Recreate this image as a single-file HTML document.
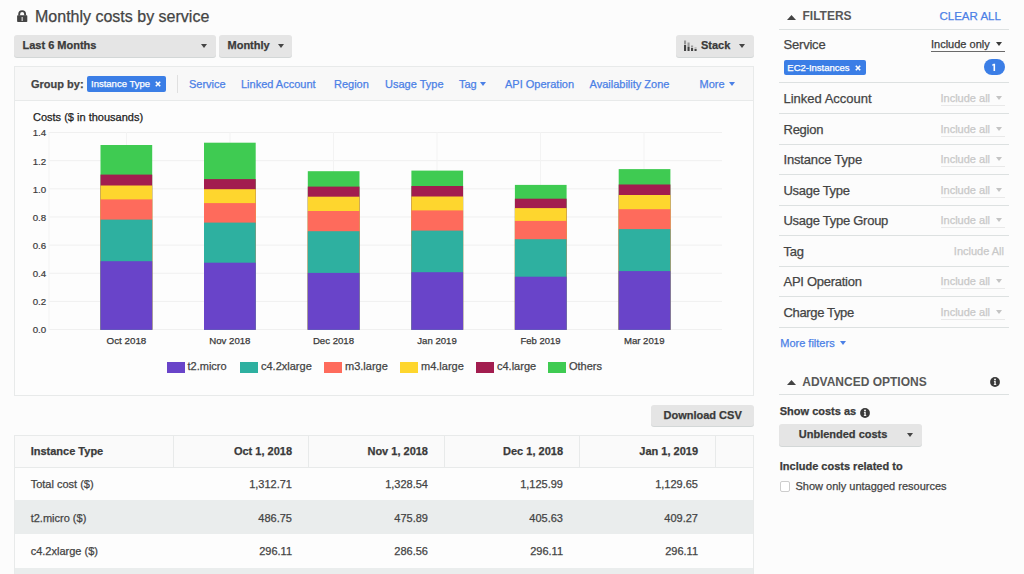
<!DOCTYPE html>
<html><head><meta charset="utf-8">
<style>
html,body{margin:0;padding:0;}
body{width:1024px;height:574px;overflow:hidden;background:#fcfcfc;position:relative;font-family:"Liberation Sans",sans-serif;color:#444;}
.t{position:absolute;white-space:nowrap;line-height:1;-webkit-text-stroke:0.25px currentColor;}
.b{font-weight:bold;}
.abs{position:absolute;}
.btn{position:absolute;background:#e5e5e5;border-radius:3px;box-shadow:0 1px 0 #d3d7d7;}
.tri{position:absolute;width:0;height:0;border-left:3.3px solid transparent;border-right:3.3px solid transparent;border-top:4.3px solid #444;}
.link{color:#4b80e6;}
.hr{position:absolute;height:1px;background:#dde1e1;}
</style></head><body>

<!-- Title -->
<svg class="abs" style="left:17px;top:10px" width="11" height="12" viewBox="0 0 11 12"><path d="M2.2 5.6V4.1a2.95 2.95 0 0 1 5.9 0v1.5" fill="none" stroke="#444" stroke-width="1.9"/><rect x="0.1" y="5.2" width="10.2" height="6.8" rx="0.8" fill="#444"/><rect x="4.6" y="7" width="1.1" height="4" fill="#fff" opacity="0.85"/></svg>
<div class="t" style="left:35px;top:8.5px;font-size:16px;color:#444">Monthly costs by service</div>

<div class="btn" style="left:14px;top:34.8px;width:201.6px;height:22.2px"></div>
<div class="t b" style="left:22.5px;top:40.2px;font-size:11px;color:#3a3a3a">Last 6 Months</div>
<div class="tri" style="left:200.8px;top:44px"></div>

<div class="btn" style="left:219px;top:35px;width:73px;height:22px"></div>
<div class="t b" style="left:227.5px;top:40.2px;font-size:11px;color:#3a3a3a">Monthly</div>
<div class="tri" style="left:277.7px;top:44px"></div>

<div class="btn" style="left:676px;top:35px;width:78px;height:22px"></div>
<svg class="abs" style="left:684px;top:40px" width="13" height="11" viewBox="0 0 13 11"><g fill="#444"><rect x="0" y="5" width="2.1" height="6"/><rect x="3.5" y="6.5" width="2.1" height="4.5"/><rect x="7" y="8" width="2.1" height="3"/><rect x="10.5" y="9" width="2.1" height="2"/></g><g fill="#999"><rect x="0" y="0.5" width="2.1" height="4"/><rect x="3.5" y="2.5" width="2.1" height="3.5"/><rect x="7" y="5.5" width="2.1" height="2"/><rect x="10.5" y="7.5" width="2.1" height="1"/></g></svg>
<div class="t b" style="left:701px;top:40.2px;font-size:11px;color:#3a3a3a">Stack</div>
<div class="tri" style="left:739.3px;top:43.8px"></div>

<!-- Chart panel -->
<div class="abs" style="left:14px;top:66px;width:738px;height:328px;border:1px solid #e8eaea;background:#fdfdfd"></div>
<div class="abs" style="left:15px;top:67px;width:738px;height:33px;background:#f8f8f8;border-bottom:1px solid #e8eaea"></div>
<div class="t b" style="left:31px;top:79.2px;font-size:11px;color:#444">Group by:</div>
<div class="abs" style="left:86.5px;top:76px;width:79px;height:16px;background:#3b7ee6;border-radius:2px"></div>
<div class="t" style="left:91px;top:79px;font-size:9.5px;color:#fff">Instance Type</div>
<svg class="abs" style="left:155px;top:81px" width="6" height="6" viewBox="0 0 6 6"><path d="M0.8 0.8L5.2 5.2M5.2 0.8L0.8 5.2" stroke="#fff" stroke-width="1.6"/></svg>
<div class="abs" style="left:177px;top:75px;width:1px;height:18px;background:#e0e0e0"></div>
<div class="t link" style="left:189px;top:79.4px;font-size:11px">Service</div>
<div class="t link" style="left:241px;top:79.4px;font-size:11px">Linked Account</div>
<div class="t link" style="left:334px;top:79.4px;font-size:11px">Region</div>
<div class="t link" style="left:385px;top:79.4px;font-size:11px">Usage Type</div>
<div class="t link" style="left:459px;top:79.4px;font-size:11px">Tag</div>
<div class="tri" style="left:480.3px;top:82.4px;border-top-color:#4b80e6"></div>
<div class="t link" style="left:505px;top:79.4px;font-size:11px">API Operation</div>
<div class="t link" style="left:589.5px;top:79.4px;font-size:11px">Availability Zone</div>
<div class="t link" style="left:699.5px;top:79.4px;font-size:11px">More</div>
<div class="tri" style="left:729px;top:82.4px;border-top-color:#4b80e6"></div>

<div class="t" style="left:33px;top:112.4px;font-size:11px;color:#222">Costs ($ in thousands)</div>

<svg class="abs" style="left:0;top:0" width="760" height="400">
 <g stroke="#f0f0f0" stroke-width="1" fill="none"><path d="M49 132.50H722M49 160.65H722M49 188.80H722M49 216.95H722M49 245.10H722M49 273.25H722M49 301.40H722M49 329.55H722"/><path d="M49 132V330M126.5 132V330M230 132V330M333.5 132V330M437 132V330M540.5 132V330M644 132V330" stroke="#f3f3f3"/></g>
 <g font-family="Liberation Sans" font-size="9.7" fill="#3a3a3a" stroke="#3a3a3a" stroke-width="0.2" text-anchor="end"><text x="46.2" y="136.3">1.4</text><text x="46.2" y="164.5">1.2</text><text x="46.2" y="192.6">1.0</text><text x="46.2" y="220.8">0.8</text><text x="46.2" y="248.9">0.6</text><text x="46.2" y="277.1">0.4</text><text x="46.2" y="305.2">0.2</text><text x="46.2" y="333.4">0.0</text></g>
 <g font-family="Liberation Sans" font-size="9.8" fill="#383838" stroke="#383838" stroke-width="0.25" text-anchor="middle"><text x="126.4" y="344.3" textLength="39.8" lengthAdjust="spacingAndGlyphs">Oct 2018</text><text x="229.85" y="344.3" textLength="41.3" lengthAdjust="spacingAndGlyphs">Nov 2018</text><text x="333.5" y="344.3" textLength="41.199999999999996" lengthAdjust="spacingAndGlyphs">Dec 2018</text><text x="437" y="344.3" textLength="39.5" lengthAdjust="spacingAndGlyphs">Jan 2019</text><text x="540.5" y="344.3" textLength="40.099999999999994" lengthAdjust="spacingAndGlyphs">Feb 2019</text><text x="644.2" y="344.3" textLength="40.599999999999994" lengthAdjust="spacingAndGlyphs">Mar 2019</text></g>
 <g id="bars"><rect x="100.5" y="145.0" width="51.7" height="184.8" fill="#3fcb52"/><rect x="100.5" y="174.6" width="51.7" height="155.2" fill="#a21d4f"/><rect x="100.5" y="185.5" width="51.7" height="144.3" fill="#fed62e"/><rect x="100.5" y="199.4" width="51.7" height="130.4" fill="#fe6b5c"/><rect x="100.5" y="219.6" width="51.7" height="110.2" fill="#2eb0a0"/><rect x="100.5" y="261.2" width="51.7" height="68.6" fill="#6944c9"/><rect x="204" y="142.7" width="51.7" height="187.1" fill="#3fcb52"/><rect x="204" y="179.1" width="51.7" height="150.7" fill="#a21d4f"/><rect x="204" y="189.2" width="51.7" height="140.6" fill="#fed62e"/><rect x="204" y="203.1" width="51.7" height="126.7" fill="#fe6b5c"/><rect x="204" y="222.6" width="51.7" height="107.2" fill="#2eb0a0"/><rect x="204" y="262.7" width="51.7" height="67.1" fill="#6944c9"/><rect x="307.8" y="171.2" width="51.7" height="158.6" fill="#3fcb52"/><rect x="307.8" y="186.6" width="51.7" height="143.2" fill="#a21d4f"/><rect x="307.8" y="196.7" width="51.7" height="133.1" fill="#fed62e"/><rect x="307.8" y="211.0" width="51.7" height="118.8" fill="#fe6b5c"/><rect x="307.8" y="231.2" width="51.7" height="98.6" fill="#2eb0a0"/><rect x="307.8" y="272.9" width="51.7" height="56.9" fill="#6944c9"/><rect x="411.4" y="170.6" width="51.7" height="159.2" fill="#3fcb52"/><rect x="411.4" y="186.0" width="51.7" height="143.8" fill="#a21d4f"/><rect x="411.4" y="196.5" width="51.7" height="133.3" fill="#fed62e"/><rect x="411.4" y="210.4" width="51.7" height="119.4" fill="#fe6b5c"/><rect x="411.4" y="230.6" width="51.7" height="99.2" fill="#2eb0a0"/><rect x="411.4" y="272.2" width="51.7" height="57.6" fill="#6944c9"/><rect x="514.9" y="184.9" width="51.7" height="144.9" fill="#3fcb52"/><rect x="514.9" y="198.7" width="51.7" height="131.1" fill="#a21d4f"/><rect x="514.9" y="208.1" width="51.7" height="121.7" fill="#fed62e"/><rect x="514.9" y="220.9" width="51.7" height="108.9" fill="#fe6b5c"/><rect x="514.9" y="239.2" width="51.7" height="90.6" fill="#2eb0a0"/><rect x="514.9" y="276.7" width="51.7" height="53.1" fill="#6944c9"/><rect x="618.7" y="169.1" width="51.7" height="160.7" fill="#3fcb52"/><rect x="618.7" y="184.5" width="51.7" height="145.3" fill="#a21d4f"/><rect x="618.7" y="195.0" width="51.7" height="134.8" fill="#fed62e"/><rect x="618.7" y="209.2" width="51.7" height="120.6" fill="#fe6b5c"/><rect x="618.7" y="229.1" width="51.7" height="100.7" fill="#2eb0a0"/><rect x="618.7" y="271.1" width="51.7" height="58.7" fill="#6944c9"/></g>
</svg>


<!-- Legend -->
<div class="abs" style="left:166.5px;top:361.5px;width:18px;height:11.5px;background:#6944c9"></div>
<div class="t" style="left:187.5px;top:361.2px;font-size:11px;color:#444">t2.micro</div>
<div class="abs" style="left:240px;top:361.5px;width:18px;height:11.5px;background:#2eb0a0"></div>
<div class="t" style="left:261.0px;top:361.2px;font-size:11px;color:#444">c4.2xlarge</div>
<div class="abs" style="left:324px;top:361.5px;width:18px;height:11.5px;background:#fe6b5c"></div>
<div class="t" style="left:345.0px;top:361.2px;font-size:11px;color:#444">m3.large</div>
<div class="abs" style="left:399.7px;top:361.5px;width:18px;height:11.5px;background:#fed62e"></div>
<div class="t" style="left:421.0px;top:361.2px;font-size:11px;color:#444">m4.large</div>
<div class="abs" style="left:476px;top:361.5px;width:18px;height:11.5px;background:#a21d4f"></div>
<div class="t" style="left:497.0px;top:361.2px;font-size:11px;color:#444">c4.large</div>
<div class="abs" style="left:548px;top:361.5px;width:18px;height:11.5px;background:#3fcb52"></div>
<div class="t" style="left:569.0px;top:361.2px;font-size:11px;color:#444">Others</div>

<!-- Download CSV -->
<div class="btn" style="left:651px;top:404.6px;width:102.5px;height:21.6px"></div>
<div class="t b" style="left:663.5px;top:409.8px;font-size:11px;color:#3a3a3a">Download CSV</div>

<!-- Table -->
<div class="abs" style="left:14px;top:435px;width:738px;height:140px;border:1px solid #e8eaea;background:#fdfdfd;border-bottom:none"></div>
<div class="abs" style="left:15px;top:436px;width:738px;height:30.5px;background:#fafafa;border-bottom:1px solid #e8eaea"></div>
<div class="abs" style="left:15px;top:500px;width:738px;height:33.5px;background:#eaeded"></div>
<div class="abs" style="left:15px;top:567.5px;width:738px;height:10px;background:#eaeded"></div>
<div class="abs" style="left:172.5px;top:436px;width:1px;height:31px;background:#e8eaea"></div>
<div class="abs" style="left:308px;top:436px;width:1px;height:31px;background:#e8eaea"></div>
<div class="abs" style="left:444px;top:436px;width:1px;height:31px;background:#e8eaea"></div>
<div class="abs" style="left:579px;top:436px;width:1px;height:31px;background:#e8eaea"></div>
<div class="abs" style="left:714.5px;top:436px;width:1px;height:31px;background:#e8eaea"></div>
<div class="t b" style="left:30.7px;top:446.3px;font-size:11px;color:#3a3a3a">Instance Type</div>
<div class="t b" style="right:732px;top:446.3px;font-size:11px;color:#3a3a3a">Oct 1, 2018</div>
<div class="t b" style="right:596px;top:446.3px;font-size:11px;color:#3a3a3a">Nov 1, 2018</div>
<div class="t b" style="right:461px;top:446.3px;font-size:11px;color:#3a3a3a">Dec 1, 2018</div>
<div class="t b" style="right:326px;top:446.3px;font-size:11px;color:#3a3a3a">Jan 1, 2019</div>

<div class="t" style="left:30.7px;top:479.3px;font-size:11px;color:#444">Total cost ($)</div>
<div class="t" style="right:732px;top:479.3px;font-size:11px;color:#444">1,312.71</div>
<div class="t" style="right:596px;top:479.3px;font-size:11px;color:#444">1,328.54</div>
<div class="t" style="right:461px;top:479.3px;font-size:11px;color:#444">1,125.99</div>
<div class="t" style="right:326px;top:479.3px;font-size:11px;color:#444">1,129.65</div>

<div class="t" style="left:30.7px;top:512.8px;font-size:11px;color:#444">t2.micro ($)</div>
<div class="t" style="right:732px;top:512.8px;font-size:11px;color:#444">486.75</div>
<div class="t" style="right:596px;top:512.8px;font-size:11px;color:#444">475.89</div>
<div class="t" style="right:461px;top:512.8px;font-size:11px;color:#444">405.63</div>
<div class="t" style="right:326px;top:512.8px;font-size:11px;color:#444">409.27</div>

<div class="t" style="left:30.7px;top:546.3px;font-size:11px;color:#444">c4.2xlarge ($)</div>
<div class="t" style="right:732px;top:546.3px;font-size:11px;color:#444">296.11</div>
<div class="t" style="right:596px;top:546.3px;font-size:11px;color:#444">286.56</div>
<div class="t" style="right:461px;top:546.3px;font-size:11px;color:#444">296.11</div>
<div class="t" style="right:326px;top:546.3px;font-size:11px;color:#444">296.11</div>

<!-- Sidebar -->
<svg class="abs" style="left:786.5px;top:14.5px" width="9" height="5" viewBox="0 0 9 5"><path d="M0 5L4.5 0L9 5Z" fill="#444"/></svg>
<div class="t b" style="left:802.5px;top:10.34px;font-size:12px;color:#585858;-webkit-text-stroke:0">FILTERS</div>
<div class="t link" style="left:939.5px;top:10.77px;font-size:11.5px">CLEAR ALL</div>
<div class="hr" style="left:779px;top:29px;width:230px"></div>
<div class="t" style="left:783.5px;top:37.75px;font-size:13px;letter-spacing:-0.2px;color:#444">Service</div>
<div class="t" style="left:931px;top:39.44px;font-size:11px;color:#3a3a3a">Include only</div>
<div class="abs" style="left:931px;top:50.8px;width:73.5px;height:1px;background:#6a6a6a"></div>
<div class="tri" style="left:996px;top:42.2px;border-top-color:#3a3a3a"></div>
<div class="abs" style="left:783.5px;top:59.5px;width:82px;height:15.5px;background:#3b7ee6;border-radius:2px"></div>
<div class="t" style="left:787.3px;top:62.53px;font-size:9.5px;color:#fff">EC2-Instances</div>
<svg class="abs" style="left:855px;top:64.6px" width="6" height="6" viewBox="0 0 6 6"><path d="M0.8 0.8L5.2 5.2M5.2 0.8L0.8 5.2" stroke="#fff" stroke-width="1.6"/></svg>
<div class="abs" style="left:983.8px;top:59.3px;width:20.8px;height:15.4px;background:#3b7ee6;border-radius:8px"></div>
<svg class="abs" style="left:990px;top:62px" width="8" height="10" viewBox="0 0 8 10"><path d="M3.5 1.7H5.1V8.9H3.5V3.4H2V2.5C2.8 2.5 3.4 2.2 3.5 1.7Z" fill="#fff"/></svg>
<div class="hr" style="left:779px;top:82.25px;width:230px"></div>
<div class="hr" style="left:779px;top:112.75px;width:230px"></div>
<div class="hr" style="left:779px;top:143.75px;width:230px"></div>
<div class="hr" style="left:779px;top:173.75px;width:230px"></div>
<div class="hr" style="left:779px;top:205.00px;width:230px"></div>
<div class="hr" style="left:779px;top:235.00px;width:230px"></div>
<div class="hr" style="left:779px;top:265.75px;width:230px"></div>
<div class="hr" style="left:779px;top:295.75px;width:230px"></div>
<div class="hr" style="left:779px;top:326.75px;width:230px"></div>
<div class="t" style="left:783.5px;top:92.00px;font-size:13px;color:#444">Linked Account</div>
<div class="t" style="left:940.5px;top:93.39px;font-size:11px;color:#c8c8c8">Include all</div>
<div class="abs" style="left:940.5px;top:105.0px;width:64px;height:1px;background:#e9e9e9"></div>
<div class="tri" style="left:996px;top:96.30px;border-top-color:#c4c4c4"></div>
<div class="t" style="left:783.5px;top:122.50px;font-size:13px;letter-spacing:-0.25px;color:#444">Region</div>
<div class="t" style="left:940.5px;top:123.89px;font-size:11px;color:#c8c8c8">Include all</div>
<div class="abs" style="left:940.5px;top:135.5px;width:64px;height:1px;background:#e9e9e9"></div>
<div class="tri" style="left:996px;top:126.80px;border-top-color:#c4c4c4"></div>
<div class="t" style="left:783.5px;top:153.00px;font-size:13px;letter-spacing:-0.17px;color:#444">Instance Type</div>
<div class="t" style="left:940.5px;top:154.39px;font-size:11px;color:#c8c8c8">Include all</div>
<div class="abs" style="left:940.5px;top:166.0px;width:64px;height:1px;background:#e9e9e9"></div>
<div class="tri" style="left:996px;top:157.30px;border-top-color:#c4c4c4"></div>
<div class="t" style="left:783.5px;top:183.50px;font-size:13px;letter-spacing:-0.3px;color:#444">Usage Type</div>
<div class="t" style="left:940.5px;top:184.89px;font-size:11px;color:#c8c8c8">Include all</div>
<div class="abs" style="left:940.5px;top:196.5px;width:64px;height:1px;background:#e9e9e9"></div>
<div class="tri" style="left:996px;top:187.80px;border-top-color:#c4c4c4"></div>
<div class="t" style="left:783.5px;top:214.00px;font-size:13px;letter-spacing:-0.27px;color:#444">Usage Type Group</div>
<div class="t" style="left:940.5px;top:215.39px;font-size:11px;color:#c8c8c8">Include all</div>
<div class="abs" style="left:940.5px;top:227.0px;width:64px;height:1px;background:#e9e9e9"></div>
<div class="tri" style="left:996px;top:218.30px;border-top-color:#c4c4c4"></div>
<div class="t" style="left:783.5px;top:244.50px;font-size:13px;letter-spacing:-0.3px;color:#444">Tag</div>
<div class="t" style="right:20px;top:245.89px;font-size:11px;color:#c8c8c8">Include All</div>
<div class="t" style="left:783.5px;top:275.00px;font-size:13px;letter-spacing:-0.27px;color:#444">API Operation</div>
<div class="t" style="left:940.5px;top:276.39px;font-size:11px;color:#c8c8c8">Include all</div>
<div class="abs" style="left:940.5px;top:288.0px;width:64px;height:1px;background:#e9e9e9"></div>
<div class="tri" style="left:996px;top:279.30px;border-top-color:#c4c4c4"></div>
<div class="t" style="left:783.5px;top:305.50px;font-size:13px;letter-spacing:-0.35px;color:#444">Charge Type</div>
<div class="t" style="left:940.5px;top:306.89px;font-size:11px;color:#c8c8c8">Include all</div>
<div class="abs" style="left:940.5px;top:318.5px;width:64px;height:1px;background:#e9e9e9"></div>
<div class="tri" style="left:996px;top:309.80px;border-top-color:#c4c4c4"></div>
<div class="t link" style="left:780.25px;top:338.24px;font-size:11px">More filters</div>
<div class="tri" style="left:840.3px;top:341px;border-top-color:#4b80e6"></div>
<svg class="abs" style="left:786.5px;top:380px" width="9" height="5" viewBox="0 0 9 5"><path d="M0 5L4.5 0L9 5Z" fill="#444"/></svg>
<div class="t b" style="left:802.25px;top:375.59px;font-size:12px;color:#585858;-webkit-text-stroke:0">ADVANCED OPTIONS</div>
<svg class="abs" style="left:990.1px;top:376.5px" width="10" height="10" viewBox="0 0 10 10"><circle cx="5" cy="5" r="4.9" fill="#3a3a3a"/><circle cx="5" cy="2.5" r="0.95" fill="#fff"/><path d="M3.9 4.1H5.7V7.2H6.3V8H3.8V7.2H4.4V4.8H3.9Z" fill="#fff"/></svg>
<div class="hr" style="left:779px;top:393.75px;width:230px"></div>
<div class="t b" style="left:779.75px;top:405.99px;font-size:11px;color:#3a3a3a">Show costs as</div>
<svg class="abs" style="left:859.7px;top:407.5px" width="10" height="10" viewBox="0 0 10 10"><circle cx="5" cy="5" r="4.9" fill="#3a3a3a"/><circle cx="5" cy="2.5" r="0.95" fill="#fff"/><path d="M3.9 4.1H5.7V7.2H6.3V8H3.8V7.2H4.4V4.8H3.9Z" fill="#fff"/></svg>
<div class="btn" style="left:779.25px;top:423.5px;width:142.5px;height:22.5px"></div>
<div class="t b" style="left:798.75px;top:428.99px;font-size:11px;color:#3a3a3a">Unblended costs</div>
<div class="tri" style="left:906.5px;top:433px"></div>
<div class="t b" style="left:779.75px;top:461.19px;font-size:11px;color:#3a3a3a">Include costs related to</div>
<div class="abs" style="left:780px;top:481.2px;width:8.2px;height:8.4px;border:1px solid #cdcdcd;border-radius:2px;background:#fff"></div>
<div class="t" style="left:795.5px;top:480.99px;font-size:11px;color:#444">Show only untagged resources</div>
</body></html>
